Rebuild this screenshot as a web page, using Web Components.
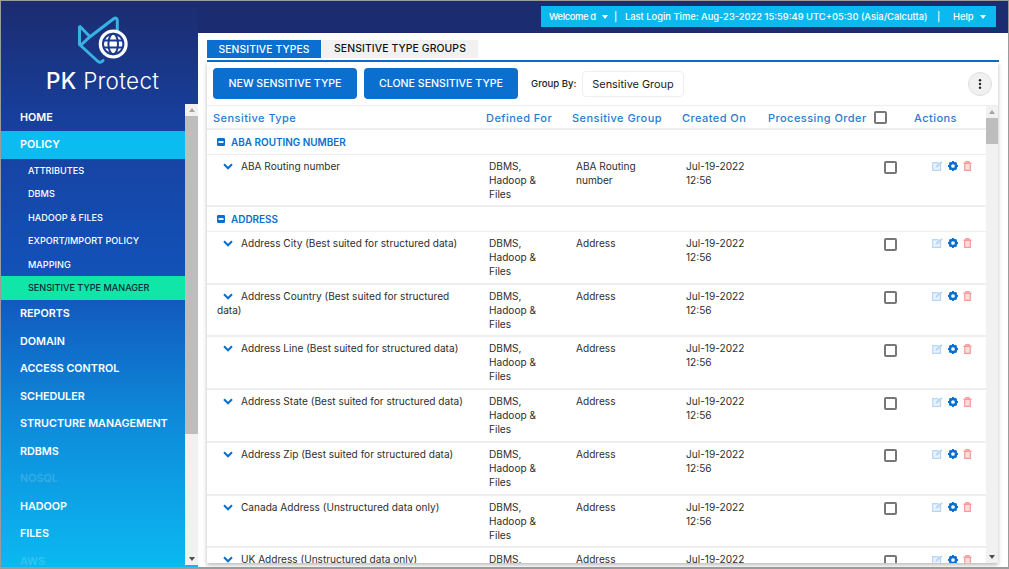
<!DOCTYPE html>
<html><head><meta charset="utf-8"><title>PK Protect</title>
<style>
html,body{margin:0;padding:0}
body{width:1009px;height:569px;box-sizing:border-box;border:1px solid #9b9b9b;border-bottom-width:2px;overflow:hidden;font-family:Inter,"Noto Sans",sans-serif;background:#fff}
</style></head><body>
<pk-app>
  <pk-sidebar slot="side">
    <pk-nav-item>HOME</pk-nav-item>
    <pk-nav-item kind="active">POLICY</pk-nav-item>
    <pk-nav-item kind="sub">ATTRIBUTES</pk-nav-item>
    <pk-nav-item kind="sub">DBMS</pk-nav-item>
    <pk-nav-item kind="sub">HADOOP &amp; FILES</pk-nav-item>
    <pk-nav-item kind="sub">EXPORT/IMPORT POLICY</pk-nav-item>
    <pk-nav-item kind="sub">MAPPING</pk-nav-item>
    <pk-nav-item kind="current">SENSITIVE TYPE MANAGER</pk-nav-item>
    <pk-nav-item>REPORTS</pk-nav-item>
    <pk-nav-item>DOMAIN</pk-nav-item>
    <pk-nav-item>ACCESS CONTROL</pk-nav-item>
    <pk-nav-item>SCHEDULER</pk-nav-item>
    <pk-nav-item>STRUCTURE MANAGEMENT</pk-nav-item>
    <pk-nav-item>RDBMS</pk-nav-item>
    <pk-nav-item kind="off">NOSQL</pk-nav-item>
    <pk-nav-item>HADOOP</pk-nav-item>
    <pk-nav-item>FILES</pk-nav-item>
    <pk-nav-item kind="off">AWS</pk-nav-item>
  </pk-sidebar>
  <pk-topbar slot="top"></pk-topbar>
  <pk-tabs slot="main"></pk-tabs>
  <pk-panel slot="main">
    <pk-toolbar slot="toolbar"></pk-toolbar>
    <pk-table-head slot="head"></pk-table-head>
    <pk-group name="ABA ROUTING NUMBER"></pk-group>
    <pk-row name="ABA Routing number" group="ABA Routing number"></pk-row>
    <pk-group name="ADDRESS"></pk-group>
    <pk-row name="Address City (Best suited for structured data)" group="Address"></pk-row>
    <pk-row name="Address Country (Best suited for structured data)" group="Address"></pk-row>
    <pk-row name="Address Line (Best suited for structured data)" group="Address"></pk-row>
    <pk-row name="Address State (Best suited for structured data)" group="Address"></pk-row>
    <pk-row name="Address Zip (Best suited for structured data)" group="Address"></pk-row>
    <pk-row name="Canada Address (Unstructured data only)" group="Address"></pk-row>
    <pk-row name="UK Address (Unstructured data only)" group="Address"></pk-row>
  </pk-panel>
</pk-app>
<script>
const COLS='272px 87px 110px 222px 88px';
function def(name,css,html){
  customElements.define(name,class extends HTMLElement{
    constructor(){super();this.attachShadow({mode:'open'});}
    connectedCallback(){
      const a=n=>this.getAttribute(n)||'';
      this.shadowRoot.innerHTML='<style>'+css+'</style>'+(typeof html==='function'?html(a):html);
    }
  });
}
def('pk-app',`
:host{display:grid;grid-template-columns:197px 810px;grid-template-rows:32px 534px;height:566px;width:1007px}
.s{grid-row:1/3;display:block}.t{display:block}
.m{display:flex;flex-direction:column;padding:7px 9px 0 9px;background:#fff;min-height:0;overflow:hidden;box-sizing:border-box}
`,`<div class="s"><slot name="side"></slot></div><div class="t"><slot name="top"></slot></div><div class="m"><slot name="main"></slot></div>`);

def('pk-logo',`
:host{display:flex;flex-direction:column;height:102.500px;box-sizing:border-box;padding-top:15px;align-items:flex-start;flex:none}
svg{display:block;margin-left:76px;width:56px;height:50px}
.w{margin:2px 0 0 45px;font:300 22.500px/25px Inter,sans-serif;color:#fff;white-space:nowrap;letter-spacing:.3px}
b{font-weight:500}
`,`<svg viewBox="77 16 56 50" fill="none">
<path d="M114 18.500 90 36.700 80.500 45.500M114 18.500C116 17.300 117.300 18.800 117.300 21V33M80 26.500 90 36.700M79.500 27V44.500L98 61.500C100 62.800 102 62 103 60.500" stroke="#37b3e3" stroke-width="3" stroke-linecap="round" stroke-linejoin="round"/>
<circle cx="113.200" cy="44" r="14.500" fill="#fff"/>
<g stroke="#1c3a8c" stroke-width="2" fill="none"><circle cx="113.200" cy="44" r="10.200"/><ellipse cx="113.200" cy="44" rx="4.800" ry="10.200"/><path d="M103.500 40.500H123M103.500 47.500H123"/></g></svg>
<div class="w"><b>PK</b> Protect</div>`);

def('pk-sidebar',`
:host{display:flex;flex-direction:column;height:566px;background:linear-gradient(180deg,#1c2c70 0,#17409e 22%,#1253ba 50%,#0e86d8 72%,#0bb9f1 100%);overflow:hidden}
.r{display:flex;flex:1;min-height:0}
nav{width:184px;height:463.500px;overflow:hidden;display:block}
`,`<pk-logo></pk-logo><div class="r"><nav><slot></slot></nav><pk-scrollbar thumb="318" style="width:13px;height:461px"></pk-scrollbar></div>`);

def('pk-nav-item',`
:host{display:block;color:#fff;font:600 10.750px/27px Inter,sans-serif;padding-left:19px;white-space:nowrap;box-sizing:border-box;height:27.500px}
:host([kind=active]){background:#0bbcf0}
:host([kind=sub]){font-size:9.150px;font-weight:500;height:23.600px;line-height:23.600px;padding-left:27px}
:host([kind=current]){background:#0fe6a8;color:#062b3a;font-size:9.100px;font-weight:500;height:23.600px;line-height:23.600px;padding-left:27px}
:host([kind=off]){color:rgba(255,255,255,.18)}
`,`<slot></slot>`);

def('pk-scrollbar',`
:host{display:flex;flex-direction:column;background:#f1f1f1;box-sizing:border-box;flex:none}
.a{height:12px;display:flex;align-items:center;justify-content:center;flex:none}
.a i{display:block;width:0;height:0;border:3.500px solid transparent}
.u i{border-bottom:4px solid #a3a3a3;border-top:0}
.d i{border-top:4px solid #505050;border-bottom:0}
.tr{flex:1}
.th{background:#bdbdbd;width:100%}
`,a=>`<div class="a u"><i></i></div><div class="tr"><div class="th" style="height:${a('thumb')}px"></div></div><div class="a d"><i></i></div>`);

def('pk-topbar',`
:host{display:flex;justify-content:flex-end;height:32px;background:#1c2c70;box-sizing:border-box;padding:5px 12px 0 0}
.b{width:455px;height:21px;background:#0cb9ef;color:#fff;font:500 9.350px/21px Inter,sans-serif;display:flex;align-items:center;white-space:nowrap;padding-left:8px;box-sizing:border-box}
i{display:inline-block;width:0;height:0;border:3.500px solid transparent;border-top:4px solid #fff;border-bottom:0;flex:none}
span{display:block;flex:none}
`,`<div class="b"><span style="width:53px;letter-spacing:-.35px">Welcome d</span><i></i><span style="margin-left:6px;width:11px">|</span><span style="width:303px">Last Login Time: Aug-23-2022 15:59:49 UTC+05:30 (Asia/Calcutta)</span><span style="margin-left:9px;width:16px">|</span><span style="width:27px">Help</span><i></i></div>`);

def('pk-tabs',`
:host{display:flex;height:20px;border-bottom:2px solid #0a6fce;flex:none;gap:1px}
div{font:500 10.400px/18px Inter,sans-serif;height:18px;text-align:center;white-space:nowrap;letter-spacing:.1px}
.on{width:114px;background:#0a6fce;color:#fff;font-size:10.300px}
.off{width:156px;background:#f1f1f1;color:#111}
`,`<div class="on">SENSITIVE TYPES</div><div class="off">SENSITIVE TYPE GROUPS</div>`);

def('pk-panel',`
:host{display:flex;flex-direction:column;height:501px;width:791px;box-shadow:0 2px 4px rgba(0,0,0,.28);background:#fff;flex:none;overflow:hidden}
.b{display:flex;height:457px;flex:none;min-height:0}
.l{width:779px;height:457px;overflow:hidden;flex:none}
`,`<slot name="toolbar"></slot><div class="b"><div class="l"><slot name="head"></slot><slot></slot></div><pk-scrollbar thumb="26" style="width:12px;height:457px"></pk-scrollbar></div>`);

def('pk-toolbar',`
:host{display:flex;flex:none;align-items:center;height:44px;padding:0 6px;border-bottom:1px solid #eee;box-sizing:border-box;font-family:Inter,sans-serif}
button{all:unset;background:#0a6fce;color:#fff;font:500 10.600px/31px Inter,sans-serif;height:31px;border-radius:4px;text-align:center;white-space:nowrap;box-sizing:border-box}
.g{font:500 9.600px Inter,sans-serif;color:#222;margin-left:13px;width:51px;white-space:nowrap}
.s{width:102px;height:26px;border:1px solid #eee;border-radius:4px;font:400 10.900px/24px Inter,sans-serif;color:#222;text-align:center;box-sizing:border-box;white-space:nowrap}
.k{margin-left:auto;width:24px;height:24px;border-radius:50%;background:#f1f1f1;border:1px solid #ddd;box-sizing:border-box;display:flex;align-items:center;justify-content:center}
`,`<button style="width:144px">NEW SENSITIVE TYPE</button><button style="width:154px;margin-left:7px">CLONE SENSITIVE TYPE</button><span class="g">Group By:</span><div class="s">Sensitive Group</div><div class="k"><svg width="4" height="10" viewBox="0 0 4 10" fill="#222"><circle cx="2" cy="1.300" r="1.200"/><circle cx="2" cy="5" r="1.200"/><circle cx="2" cy="8.700" r="1.200"/></svg></div>`);

def('pk-check',`
:host{display:block;width:13px;height:13px;border:2px solid #777;border-radius:2px;box-sizing:border-box;background:#fff;flex:none}
`,``);

def('pk-table-head',`
:host{display:grid;grid-template-columns:279px 86px 110px 86px 106px 40px 72px;height:24px;padding-top:1px;width:779px;align-items:center;border-bottom:2px solid #eee;box-sizing:border-box;color:#2a7bd0;font:500 11px/20px Inter,sans-serif;letter-spacing:.45px;white-space:nowrap}
span{display:block}
.f{padding-left:6px}
`,`<span class="f">Sensitive Type</span><span>Defined For</span><span>Sensitive Group</span><span>Created On</span><span>Processing Order</span><pk-check></pk-check><span>Actions</span>`);

def('pk-group',`
:host{display:flex;align-items:center;height:24.500px;border-bottom:1px solid #eee;box-sizing:border-box;padding-left:10px;color:#0a6fce;font:600 9.950px Inter,sans-serif;white-space:nowrap}
svg{margin-right:6px;flex:none}
`,a=>`<svg width="8" height="8" viewBox="0 0 8 8"><rect width="8" height="8" rx="1.300" fill="#0a6fce"/><rect x="1.500" y="3.100" width="5" height="1.800" fill="#fff"/></svg>${a('name')}`);

def('pk-row',`
:host{display:grid;grid-template-columns:${COLS};height:52.750px;border-bottom:2px solid #eee;box-sizing:border-box;color:#2e2e2e;font:400 10.100px/14px Inter,sans-serif;padding-top:4px}
.c{padding:0 12px 0 10px}
.n svg{margin:0 8px 0 6px}
.w{width:62px}
.cwrap{display:flex}
.cwrap .c{width:208px;box-sizing:border-box}
.cwrap pk-check{margin-top:2.500px}
.acts{display:flex;gap:5px;padding:2.500px 0 0 34px;align-items:flex-start}
`,a=>`<div class="c n"><svg width="10" height="7" viewBox="0 0 10 7" fill="none"><path d="M1 1.300 5 5.300 9 1.300" stroke="#0a6fce" stroke-width="2"/></svg>${a('name')}</div><div class="c"><div class="w">DBMS, Hadoop &amp; Files</div></div><div class="c">${a('group')}</div><div class="cwrap"><div class="c"><div class="w">Jul-19-2022 12:56</div></div><pk-check></pk-check></div><div class="acts">
<svg width="11" height="10" viewBox="0 0 11 10" fill="#e9f2fc" stroke="#b7d5f5" stroke-width="1.200"><path d="M8.500 6V9.300H.7V1.700H5.500L8.500 3Z"/><path d="M3.500 6.800 4 4.800 9.300 .3 10.700 1.600 5.400 6.300Z" fill="#b7d5f5" stroke="none"/></svg>
<svg width="10" height="10" viewBox="0 0 10 10"><circle cx="5" cy="5" r="3.100" fill="none" stroke="#0a6fce" stroke-width="2.500"/><g stroke="#0a6fce" stroke-width="1.900"><path d="M5 0V2M5 8V10M0 5H2M8 5H10M1.500 1.500 2.800 2.800M7.200 7.200 8.500 8.500M8.500 1.500 7.200 2.800M2.800 7.200 1.500 8.500"/></g></svg>
<svg width="9" height="10" viewBox="0 0 9 10" fill="#fddcdc" stroke="#f89a9a" stroke-width="1.200"><path d="M1.700 2.500V9.300H7.300V2.500Z"/><path d="M.3 2.200H8.700M3 2V.7H6V2" fill="none"/></svg></div>`);
</script>
</body></html>
